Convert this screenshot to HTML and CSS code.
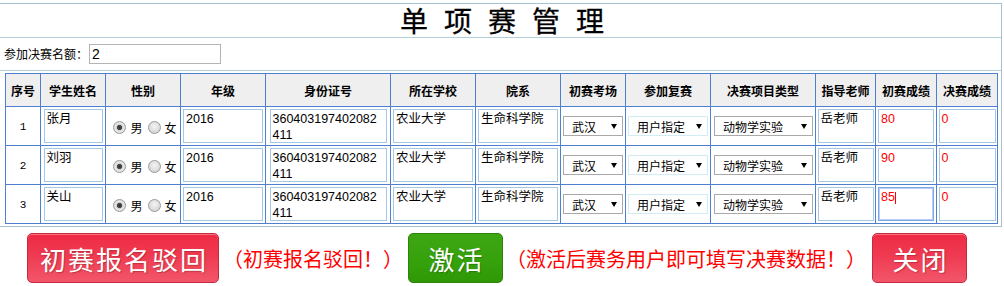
FILE: index.html
```html
<!DOCTYPE html>
<html lang="zh-CN">
<head>
<meta charset="utf-8">
<title>单项赛管理</title>
<link rel="stylesheet" href="styles.css">
</head>
<body>
<div class="frame">
  <div class="title-row"><h1 class="title">单项赛管理</h1></div>
  <div class="quota-row">
    <label class="quota-label" for="quota">参加决赛名额：</label><input id="quota" class="quota-input" type="text" value="2">
  </div>
  <div class="table-row">
    <table class="grid">
      <colgroup>
        <col class="c-seq"><col class="c-name"><col class="c-sex"><col class="c-year"><col class="c-id"><col class="c-school"><col class="c-dept"><col class="c-site"><col class="c-re"><col class="c-type"><col class="c-teacher"><col class="c-s1"><col class="c-s2">
      </colgroup>
      <thead>
        <tr>
          <th>序号</th><th>学生姓名</th><th>性别</th><th>年级</th><th>身份证号</th><th>所在学校</th><th>院系</th><th>初赛考场</th><th>参加复赛</th><th>决赛项目类型</th><th>指导老师</th><th>初赛成绩</th><th>决赛成绩</th>
        </tr>
      </thead>
      <tbody>
        <tr>
          <td class="seq">1</td>
          <td><textarea class="ta w-name">张月</textarea></td>
          <td class="sex"><label class="opt"><input type="radio" name="sex1" checked>男</label><label class="opt"><input type="radio" name="sex1">女</label></td>
          <td><textarea class="ta w-year">2016</textarea></td>
          <td><textarea class="ta w-id">360403197402082411</textarea></td>
          <td><textarea class="ta w-school">农业大学</textarea></td>
          <td><textarea class="ta w-dept">生命科学院</textarea></td>
          <td><span class="sel sel-site"><select><option>武汉</option></select></span></td>
          <td><span class="sel sel-re"><select><option>用户指定</option></select></span></td>
          <td><span class="sel sel-type"><select><option>动物学实验</option></select></span></td>
          <td><textarea class="ta w-teacher">岳老师</textarea></td>
          <td><textarea class="ta w-s1 score">80</textarea></td>
          <td><textarea class="ta w-s2 score">0</textarea></td>
        </tr>
        <tr>
          <td class="seq">2</td>
          <td><textarea class="ta w-name">刘羽</textarea></td>
          <td class="sex"><label class="opt"><input type="radio" name="sex2" checked>男</label><label class="opt"><input type="radio" name="sex2">女</label></td>
          <td><textarea class="ta w-year">2016</textarea></td>
          <td><textarea class="ta w-id">360403197402082411</textarea></td>
          <td><textarea class="ta w-school">农业大学</textarea></td>
          <td><textarea class="ta w-dept">生命科学院</textarea></td>
          <td><span class="sel sel-site"><select><option>武汉</option></select></span></td>
          <td><span class="sel sel-re"><select><option>用户指定</option></select></span></td>
          <td><span class="sel sel-type"><select><option>动物学实验</option></select></span></td>
          <td><textarea class="ta w-teacher">岳老师</textarea></td>
          <td><textarea class="ta w-s1 score">90</textarea></td>
          <td><textarea class="ta w-s2 score">0</textarea></td>
        </tr>
        <tr>
          <td class="seq">3</td>
          <td><textarea class="ta w-name">关山</textarea></td>
          <td class="sex"><label class="opt"><input type="radio" name="sex3" checked>男</label><label class="opt"><input type="radio" name="sex3">女</label></td>
          <td><textarea class="ta w-year">2016</textarea></td>
          <td><textarea class="ta w-id">360403197402082411</textarea></td>
          <td><textarea class="ta w-school">农业大学</textarea></td>
          <td><textarea class="ta w-dept">生命科学院</textarea></td>
          <td><span class="sel sel-site"><select><option>武汉</option></select></span></td>
          <td><span class="sel sel-re"><select><option>用户指定</option></select></span></td>
          <td><span class="sel sel-type"><select><option>动物学实验</option></select></span></td>
          <td><textarea class="ta w-teacher">岳老师</textarea></td>
          <td><span class="caret-wrap"><textarea class="ta w-s1 score focused">85</textarea></span></td>
          <td><textarea class="ta w-s2 score">0</textarea></td>
        </tr>
      </tbody>
    </table>
  </div>
</div>
<div class="actions">
  <button class="btn btn-red btn-reject" type="button">初赛报名驳回</button>
  <span class="note note-reject">（初赛报名驳回！）</span>
  <button class="btn btn-green btn-activate" type="button">激活</button>
  <span class="note note-activate">（激活后赛务用户即可填写决赛数据！）</span>
  <button class="btn btn-red btn-close" type="button">关闭</button>
</div>
</body>
</html>
```
FILE: styles.css
```css
* { box-sizing: border-box; }

html, body {
  margin: 0;
  padding: 0;
  background: #ffffff;
}

body {
  font-family: "Noto Sans CJK SC", "Liberation Sans", sans-serif;
  font-size: 12px;
  color: #000000;
  width: 1004px;
  height: 286px;
  overflow: hidden;
}

.frame {
  width: 1002px;
  margin-top: 3px;
  border-top: 1px solid #a6c2d2;
  border-right: 1px solid #a6c2d2;
  border-bottom: 1px solid #a6c2d2;
}

.title-row {
  height: 34px;
  border-bottom: 1px solid #b3cfd9;
}

.title {
  margin: 0;
  height: 33px;
  line-height: 33px;
  font-size: 28px;
  font-weight: normal;
  text-align: center;
  letter-spacing: 16px;
  padding-left: 19px;
  font-family: "Noto Sans CJK SC", sans-serif;
  -webkit-text-stroke: 0.3px #000;
}

.quota-row {
  height: 33px;
  border-bottom: 1px solid #b3cfd9;
  display: flex;
  align-items: center;
  padding-left: 4px;
  padding-bottom: 1px;
}

.quota-label {
  font-size: 12px;
  line-height: 16px;
}

.quota-input {
  width: 132px;
  height: 20px;
  margin: 0 0 0 1px;
  padding: 0 2px;
  border: 1px solid #b4b4b4;
  font-family: "Liberation Sans", sans-serif;
  font-size: 14px;
  color: #000;
  outline: none;
}

.table-row {
  padding: 2px 0 2px 5px;
}

.grid {
  table-layout: fixed;
  border-collapse: separate;
  border-spacing: 0;
  width: 993px;
  border-top: 1px solid #4f7fcf;
  border-left: 1px solid #4f7fcf;
}

.c-seq { width: 35px; }
.c-name { width: 65px; }
.c-sex { width: 75px; }
.c-year { width: 85px; }
.c-id { width: 125px; }
.c-school { width: 85px; }
.c-dept { width: 85px; }
.c-site { width: 65px; }
.c-re { width: 85px; }
.c-type { width: 105px; }
.c-teacher { width: 60px; }
.c-s1 { width: 61px; }
.c-s2 { width: 61px; }

.grid th,
.grid td {
  border-right: 1px solid #4f7fcf;
  border-bottom: 1px solid #4f7fcf;
  padding: 0;
  text-align: center;
  vertical-align: middle;
}

.grid th {
  height: 33px;
  background: #efefef;
  font-weight: bold;
  font-size: 12px;
  white-space: nowrap;
}

.grid td {
  height: 39px;
}

.seq {
  font-family: "Liberation Mono", monospace;
  font-size: 11px;
  padding-top: 2px !important;
}

.ta {
  display: block;
  margin: 0 auto;
  height: 34px;
  border: 1px solid #a3c9e6;
  padding: 1px 4px 0 2px;
  resize: none;
  overflow: hidden;
  font-family: "Liberation Sans", "Noto Sans CJK SC", sans-serif;
  font-size: 12.5px;
  line-height: 16px;
  color: #000;
  background: #fff;
  outline: none;
  text-align: left;
}

.w-name { width: 59px; }
.w-year { width: 80px; }
.w-id { width: 117px; }
.w-school { width: 80px; }
.w-dept { width: 80px; }
.w-teacher { width: 56px; }
.w-s1 { width: 56px; }
.w-s2 { width: 57px; }

.score { color: #ff0000; }

.focused {
  border-color: #7ba6ee;
  box-shadow: inset 0 0 0 1px #b9d0f6;
}

.caret-wrap {
  position: relative;
  display: block;
}

.caret-wrap::after {
  content: "";
  position: absolute;
  left: 19px;
  top: 5px;
  width: 1px;
  height: 12px;
  background: #ff0000;
}

.sex {
  padding-left: 4px !important;
  white-space: nowrap;
}

.opt {
  display: inline-flex;
  align-items: center;
  font-size: 12px;
  line-height: 14px;
  vertical-align: middle;
}

.opt + .opt { margin-left: 5px; }

.opt input {
  appearance: none;
  -webkit-appearance: none;
  width: 13px;
  height: 13px;
  margin: 0 4px 0 0;
  border-radius: 50%;
  border: 1px solid #9a9a9a;
  background: radial-gradient(circle at 50% 40%, #f4f4f4 0%, #dcdcdc 60%, #c8c8c8 100%);
}

.opt input:checked {
  background:
    radial-gradient(circle, #333 0, #4a4a4a 2.2px, #d0d0d0 3px, #ececec 4.5px, #d0d0d0 6px);
}

.sel {
  position: relative;
  display: inline-block;
  vertical-align: middle;
}

.sel select {
  appearance: none;
  -webkit-appearance: none;
  display: block;
  height: 20px;
  margin: 0;
  padding: 0 0 0 8px;
  border: 1px solid #a9a9a9;
  border-radius: 0;
  background: #fff;
  font-family: "Noto Sans CJK SC", sans-serif;
  font-size: 12px;
  color: #000;
  outline: none;
}

.sel::after {
  content: "";
  position: absolute;
  right: 6px;
  top: 8px;
  border-left: 3px solid transparent;
  border-right: 3px solid transparent;
  border-top: 5px solid #000;
  pointer-events: none;
}

.sel-site select { width: 60px; }
.sel-re select { width: 80px; border-color: #d2ecf6; }
.sel-type select { width: 99px; }
.sel-type { margin-left: 1px; }

.actions {
  display: flex;
  align-items: center;
  margin-top: 6px;
  padding-left: 27px;
}

.btn {
  height: 50px;
  border-radius: 5px;
  font-family: "Noto Sans CJK SC", sans-serif;
  font-size: 26px;
  letter-spacing: 2px;
  padding: 0 0 0 2px;
  color: #ffffff;
  text-shadow: 1px 1px 1px rgba(90, 20, 20, 0.35);
  cursor: pointer;
  flex: none;
}

.btn-red {
  background: linear-gradient(#ee2b44 0%, #ef3a51 45%, #f2566a 100%);
  border: 1px solid #c42b3d;
  box-shadow: inset 0 1px 0 rgba(255, 160, 170, 0.6);
}

.btn-green {
  background: linear-gradient(#3da713 0%, #35a10b 60%, #2e9806 100%);
  border: 1px solid #2e8408;
  text-shadow: 1px 1px 1px rgba(20, 60, 0, 0.35);
}

.btn-reject { width: 192px; }
.btn-activate { width: 95px; margin-left: 5px; }
.btn-close { width: 95px; margin-left: 6px; }

.note {
  color: #ff0000;
  white-space: nowrap;
  font-family: "Noto Sans CJK SC", sans-serif;
  font-size: 20px;
}

.note-reject { margin-left: 4px; }
.note-activate { margin-left: 3px; }
```
